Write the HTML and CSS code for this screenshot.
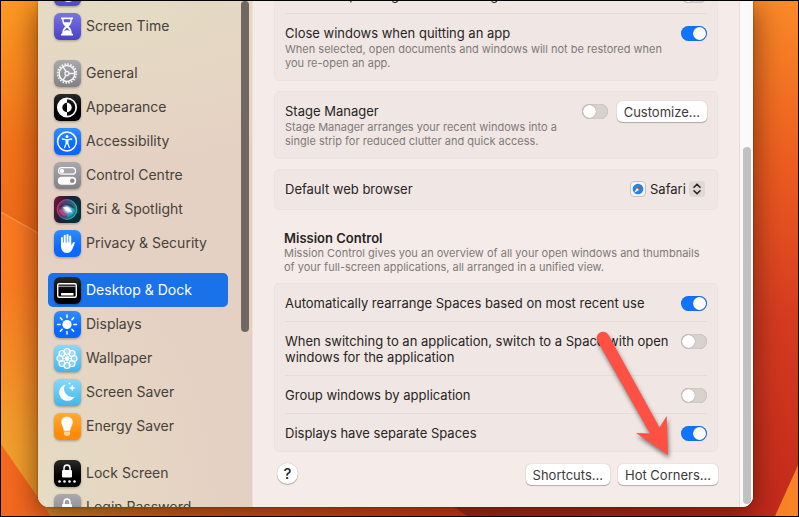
FILE: index.html
```html
<!DOCTYPE html>
<html lang="en">
<head>
<meta charset="utf-8">
<title>System Settings</title>
<link rel="stylesheet" href="styles.css">
</head>
<body>
<svg class="wallpaper" viewBox="0 0 799 517" preserveAspectRatio="none" aria-hidden="true">
  <defs>
    <linearGradient id="wl" x1="0" y1="0" x2="0" y2="1"><stop offset="0" stop-color="#fd9a22"/><stop offset=".28" stop-color="#f4731a"/><stop offset=".5" stop-color="#ee6a18"/></linearGradient>
    <linearGradient id="wl2" gradientUnits="userSpaceOnUse" x1="0" y1="215" x2="0" y2="450"><stop offset="0" stop-color="#fb7a22"/><stop offset=".3" stop-color="#fb7c22"/><stop offset="1" stop-color="#f2a02c"/></linearGradient>
    <linearGradient id="wr" x1="0" y1="0" x2="0" y2="1"><stop offset="0" stop-color="#fa8a28"/><stop offset=".3" stop-color="#ec5f20"/><stop offset=".62" stop-color="#d53b20"/><stop offset="1" stop-color="#c42a1b"/></linearGradient>
    <linearGradient id="wb" x1="0" y1="0" x2="1" y2="0"><stop offset="0" stop-color="#e89a2c"/><stop offset=".35" stop-color="#e0641c"/><stop offset="1" stop-color="#dd3f18"/></linearGradient>
    <linearGradient id="wd" x1="0" y1="0" x2="1" y2="0"><stop offset="0" stop-color="#a82a1b"/><stop offset="1" stop-color="#c72b1b"/></linearGradient>
  </defs>
  <rect width="400" height="517" fill="url(#wl)"/>
  <rect x="400" width="399" height="517" fill="url(#wr)"/>
  <path d="M0 212L60 246V517H0Z" fill="url(#wl2)"/>
  <path d="M0 212L60 246" stroke="#ff9440" stroke-width="1.5"/>
  <rect x="40" y="490" width="430" height="27" fill="url(#wb)"/>
  <path d="M430 490L467 517H760V490Z" fill="url(#wd)"/>
  <path d="M0 445L50 517H0Z" fill="#f4691f"/>
  <path d="M799 466L776 517H799Z" fill="#f98327"/>
</svg>

<div class="window">
  <aside class="sidebar">
    <nav class="nav" aria-label="Settings">
      <div class="group">
        <a class="item" href="#focus">
          <svg class="icon" viewBox="0 0 27 27"><rect width="27" height="27" rx="6" fill="#534bd0"/><path d="M16 5a9 9 0 1 0 6 14A9 9 0 0 1 16 5Z" fill="#fff"/></svg>
        </a>
        <a class="item" href="#screen-time">
          <svg class="icon" viewBox="0 0 27 27"><defs><linearGradient id="pu" x2="0" y2="1"><stop stop-color="#7a74e2"/><stop offset="1" stop-color="#4a41c8"/></linearGradient></defs><rect width="27" height="27" rx="6" fill="url(#pu)"/><path d="M7 4.500h12v1.800h-1.200c0 3.800-1.300 5.500-3.200 7.200 1.900 1.700 3.200 3.400 3.200 7.200H19v1.800H7v-1.800h1.200c0-3.800 1.300-5.500 3.200-7.200-1.900-1.700-3.200-3.400-3.200-7.200H7Z" fill="#fff"/><path d="M9.600 6.300h6.800c0 1.200-.2 2-.5 2.900h-5.800c-.3-.9-.5-1.700-.5-2.900ZM13 14.500l3.100 3.500-3.100-1-3.100 1Z" fill="#6159d4"/></svg>
          <span>Screen Time</span></a>
      </div>
      <div class="group">
        <a class="item" href="#general">
          <svg class="icon" viewBox="0 0 27 27"><defs><linearGradient id="gr" x2="0" y2="1"><stop stop-color="#aaaaae"/><stop offset="1" stop-color="#808085"/></linearGradient></defs><rect width="27" height="27" rx="6" fill="url(#gr)"/><g fill="none" stroke="#f5f5f5"><circle cx="13" cy="13.500" r="9.300" stroke-width="1.800" stroke-dasharray="1.600 1.322"/><circle cx="13" cy="13.500" r="7.900" stroke-width="1.500"/><circle cx="13" cy="13.500" r="2" stroke-width="1.300"/><path d="M15 13.500h5.500M12 11.700L9.200 7M12 15.300L9.200 20" stroke-width="1.400"/></g></svg>
          <span>General</span></a>
        <a class="item" href="#appearance">
          <svg class="icon" viewBox="0 0 27 27"><defs><linearGradient id="bk" x2="0" y2="1"><stop stop-color="#2a2a2a"/><stop offset=".6" stop-color="#000"/></linearGradient></defs><rect width="27" height="27" rx="6" fill="url(#bk)"/><circle cx="13" cy="13.500" r="9.200" fill="none" stroke="#fff" stroke-width="1.700"/><path d="M13 4.500a9 9 0 0 0 0 18v-4.300a4.700 4.700 0 0 1 0-9.400Z" fill="#fff"/><path d="M13 8.800a4.700 4.700 0 0 1 0 9.400Z" fill="#fff"/></svg>
          <span>Appearance</span></a>
        <a class="item" href="#accessibility">
          <svg class="icon" viewBox="0 0 27 27"><defs><linearGradient id="bl" x2="0" y2="1"><stop stop-color="#2f8dff"/><stop offset=".7" stop-color="#0868ff"/></linearGradient></defs><rect width="27" height="27" rx="6" fill="url(#bl)"/><circle cx="13" cy="13.500" r="9.400" fill="none" stroke="#fff" stroke-width="1.500"/><circle cx="13" cy="8.600" r="1.500" fill="#fff"/><path d="M8.300 11l3.300.7h2.800l3.300-.7M12.200 12v3.500l-1.600 4M13.800 12v3.500l1.600 4M13 11.800v3.600" fill="none" stroke="#fff" stroke-width="1.300" stroke-linecap="round" stroke-linejoin="round"/></svg>
          <span>Accessibility</span></a>
        <a class="item" href="#control-centre">
          <svg class="icon" viewBox="0 0 27 27"><rect width="27" height="27" rx="6" fill="url(#gr)"/><rect x="4.500" y="5.600" width="17" height="6.600" rx="3.300" fill="#a4a4a7" stroke="#fff" stroke-width="1.300"/><circle cx="8" cy="8.900" r="2.200" fill="#fff"/><rect x="3.800" y="14.800" width="18.400" height="8" rx="4" fill="#fff"/><circle cx="18.300" cy="18.800" r="2.300" fill="#8a8a8e"/></svg>
          <span>Control Centre</span></a>
        <a class="item" href="#siri">
          <svg class="icon" viewBox="0 0 27 27"><defs><linearGradient id="sb" x1="0" x2="1" y2=".4"><stop stop-color="#7c1236"/><stop offset=".5" stop-color="#1d1f35"/><stop offset="1" stop-color="#06313a"/></linearGradient><linearGradient id="so" x1="0" x2="1" y2=".3"><stop stop-color="#e0245e"/><stop offset=".45" stop-color="#5c5f9c"/><stop offset="1" stop-color="#1bb5a4"/></linearGradient><radialGradient id="sw"><stop stop-color="#fff"/><stop offset=".4" stop-color="#d9f2ff" stop-opacity=".85"/><stop offset="1" stop-color="#5cb6ff" stop-opacity="0"/></radialGradient></defs><rect width="27" height="27" rx="6" fill="url(#sb)"/><circle cx="13" cy="13.500" r="9.800" fill="url(#so)" fill-opacity=".6" stroke="url(#so)" stroke-width="1.200"/><path d="M5 11c5-5 12-4 16 1-5-2-9 0-16-1Z" fill="#111c33" opacity=".6"/><path d="M5 14c4-2 7 1 9 5-4 2-8 0-9-5Z" fill="#ee3e78" opacity=".7"/><path d="M12 14c4-3 7-2 9 0-1 4-4 7-8 7Z" fill="#2e9ee8" opacity=".7"/><ellipse cx="13.500" cy="13.500" rx="7" ry="5.200" fill="url(#sw)" transform="rotate(30 13.500 13.500)"/><path d="M8.500 11.500l5-1 5 6-4-1Z" fill="#fff" opacity=".8"/></svg>
          <span>Siri &amp; Spotlight</span></a>
        <a class="item" href="#privacy">
          <svg class="icon" viewBox="0 0 27 27"><rect width="27" height="27" rx="6" fill="url(#bl)"/><g fill="none" stroke="#fff" stroke-width="2" stroke-linecap="round"><path d="M8 8v7M10.700 5.800v9M13.500 5v9M16.200 6.500v8M19.800 13l-2.300 4.500"/></g><path d="M7 12.500h10.200v3l1.500-1.500 1 1.500c-1.200 4-2.900 7.500-6.600 7.500-4 0-6.100-3-6.100-7Z" fill="#fff"/></svg>
          <span>Privacy &amp; Security</span></a>
      </div>
      <div class="group">
        <a class="item selected" href="#desktop" aria-current="page">
          <svg class="icon" viewBox="0 0 27 27"><rect width="27" height="27" rx="6" fill="url(#bk)"/><rect x="3.700" y="6.700" width="18.600" height="13.600" rx="1.500" fill="none" stroke="#fff" stroke-width="1.400"/><path d="M4 9.300h18" stroke="#bbb" stroke-width="1"/><rect x="7" y="16" width="12.500" height="2.500" fill="#fff"/></svg>
          <span>Desktop &amp; Dock</span></a>
        <a class="item" href="#displays">
          <svg class="icon" viewBox="0 0 27 27"><rect width="27" height="27" rx="6" fill="url(#bl)"/><circle cx="13" cy="13.500" r="4.600" fill="#fff"/><path d="M13 4v2.600M13 20.400V23M3.500 13.500h2.600M19.900 13.500h2.600M6.300 6.800l1.800 1.800M17.900 18.400l1.800 1.800M6.300 20.200l1.800-1.800M17.900 8.600l1.800-1.800" stroke="#fff" stroke-width="1.500" stroke-linecap="round"/></svg>
          <span>Displays</span></a>
        <a class="item" href="#wallpaper">
          <svg class="icon" viewBox="0 0 27 27"><defs><linearGradient id="cy" x2="0" y2="1"><stop stop-color="#86dafa"/><stop offset="1" stop-color="#45b4ea"/></linearGradient></defs><rect width="27" height="27" rx="6" fill="url(#cy)"/><g fill="#fff" fill-opacity=".3" stroke="#fff" stroke-width="1.200"><circle cx="13" cy="6.500" r="3"/><circle cx="18" cy="8.500" r="3"/><circle cx="20" cy="13.500" r="3"/><circle cx="18" cy="18.500" r="3"/><circle cx="13" cy="20.500" r="3"/><circle cx="8" cy="18.500" r="3"/><circle cx="6" cy="13.500" r="3"/><circle cx="8" cy="8.500" r="3"/></g><path d="M13 9v9M8.500 13.500h9M9.800 10.300l6.400 6.400M9.800 16.700l6.400-6.400" stroke="#fff" stroke-width="1"/><circle cx="13" cy="13.500" r="2.300" fill="#fff"/></svg>
          <span>Wallpaper</span></a>
        <a class="item" href="#screen-saver">
          <svg class="icon" viewBox="0 0 27 27"><rect width="27" height="27" rx="6" fill="url(#cy)"/><path d="M11.500 5.500A8.300 8.300 0 1 0 20.800 17.500 8 8 0 0 1 11.500 5.500Z" fill="#fff"/><path d="M18.200 5.500l.9 2.600 2.600.9-2.600.9-.9 2.600-.9-2.600-2.600-.9 2.600-.9ZM15.500 3l.4 1.200 1.200.4-1.200.4-.4 1.200-.4-1.200-1.200-.4 1.200-.4Z" fill="#fff"/></svg>
          <span>Screen Saver</span></a>
        <a class="item" href="#energy">
          <svg class="icon" viewBox="0 0 27 27"><defs><linearGradient id="or" x2="0" y2="1"><stop stop-color="#ffac35"/><stop offset=".8" stop-color="#ff8a05"/></linearGradient></defs><rect width="27" height="27" rx="6" fill="url(#or)"/><path d="M13 3.700c3.600 0 5.700 2.500 5.700 5.400 0 3-2 4.200-2.400 8.600H9.700C9.300 13.300 7.300 12.100 7.300 9.100c0-2.900 2.100-5.400 5.700-5.400Z" fill="#fff"/><path d="M10 18.600h6v2.400c0 1.300-1.200 2-3 2s-3-.7-3-2Z" fill="#ffd39a"/></svg>
          <span>Energy Saver</span></a>
      </div>
      <div class="group">
        <a class="item" href="#lock">
          <svg class="icon" viewBox="0 0 27 27"><rect width="27" height="27" rx="6" fill="url(#bk)"/><path d="M10 10.500V8.300a3 3.300 0 0 1 6 0v2.200" fill="none" stroke="#fff" stroke-width="1.500"/><rect x="8" y="10" width="10" height="7.500" rx="1.200" fill="#fff"/><g fill="#fff"><circle cx="5.500" cy="21.500" r="1.300"/><circle cx="10.500" cy="21.500" r="1.300"/><circle cx="15.500" cy="21.500" r="1.300"/><circle cx="20.500" cy="21.500" r="1.300"/></g></svg>
          <span>Lock Screen</span></a>
        <a class="item" href="#login">
          <svg class="icon" viewBox="0 0 27 27"><rect width="27" height="27" rx="6" fill="url(#gr)"/><path d="M10 10.500V8.300a3 3.300 0 0 1 6 0v2.200" fill="none" stroke="#fff" stroke-width="1.500"/><rect x="8" y="10" width="10" height="7.500" rx="1.200" fill="#fff"/></svg>
          <span>Login Password</span></a>
      </div>
    </nav>
    <div class="side-scroll"></div>
  </aside>

  <main class="content">
    <section class="card card-scrolled">
      <div class="row">
        <label class="title" for="ask">Ask to keep changes when closing documents</label>
        <input class="switch" type="checkbox" role="switch" id="ask">
      </div>
      <div class="row">
        <div class="text">
          <label class="title" for="close">Close windows when quitting an app</label>
          <p class="desc">When selected, open documents and windows will not be restored when<br>you re-open an app.</p>
        </div>
        <input class="switch" type="checkbox" role="switch" id="close" checked>
      </div>
    </section>

    <section class="card">
      <div class="row">
        <div class="text">
          <label class="title" for="stage">Stage Manager</label>
          <p class="desc">Stage Manager arranges your recent windows into a<br>single strip for reduced clutter and quick access.</p>
        </div>
        <input class="switch" type="checkbox" role="switch" id="stage">
        <button class="button in-row" type="button">Customize...</button>
      </div>
    </section>

    <section class="card">
      <div class="row row-select">
        <label class="title" for="browser">Default web browser</label>
        <span class="picker">
          <svg class="safari" viewBox="0 0 16 16" aria-hidden="true"><rect x=".5" y=".5" width="15" height="15" rx="3.500" fill="#f4f4f4" stroke="#c6c2c0"/><circle cx="8" cy="8" r="5.300" fill="#1f87e5"/><path d="M11.800 4.200L9 9 7 7Z" fill="#f03a30"/><path d="M4.200 11.800L7 7l2 2Z" fill="#fff"/></svg>
          <select id="browser"><option>Safari</option></select>
          <svg class="chevrons" viewBox="0 0 16 16" aria-hidden="true"><rect width="16" height="16" rx="4" fill="#e0d8d5"/><path d="M5 6.200L8 3.200l3 3M5 9.800l3 3 3-3" fill="none" stroke="#272423" stroke-width="1.600" stroke-linecap="round" stroke-linejoin="round"/></svg>
        </span>
      </div>
    </section>

    <header class="section-head">
      <h2>Mission Control</h2>
      <p class="desc">Mission Control gives you an overview of all your open windows and thumbnails<br>of your full-screen applications, all arranged in a unified view.</p>
    </header>

    <section class="card">
      <div class="row">
        <label class="title" for="rearrange">Automatically rearrange Spaces based on most recent use</label>
        <input class="switch" type="checkbox" role="switch" id="rearrange" checked>
      </div>
      <div class="row">
        <label class="title" for="switching">When switching to an application, switch to a Space with open<br>windows for the application</label>
        <input class="switch" type="checkbox" role="switch" id="switching">
      </div>
      <div class="row">
        <label class="title" for="group">Group windows by application</label>
        <input class="switch" type="checkbox" role="switch" id="group">
      </div>
      <div class="row">
        <label class="title" for="separate">Displays have separate Spaces</label>
        <input class="switch" type="checkbox" role="switch" id="separate" checked>
      </div>
    </section>

    <footer class="actions">
      <button class="help" type="button" aria-label="Help">?</button>
      <button class="button" type="button">Shortcuts...</button>
      <button class="button" type="button">Hot Corners...</button>
    </footer>
  </main>

  <div class="track"><div class="thumb"></div></div>
</div>

<svg class="arrow" viewBox="0 0 84 132" aria-hidden="true"><path d="M7.500 16A6 6 0 0 1 18.500 10L69.500 102.500L76.700 91L78 130L46 108L60 108.500Z" fill="#ff5044"/></svg>
</body>
</html>
```
FILE: styles.css
```css
* { box-sizing: border-box; }

body {
  margin: 0;
  height: 100vh;
  display: flex;
  position: relative;
  overflow: hidden;
  border: 1px solid #000;
  font: 13px/16px Inter, "Liberation Sans", sans-serif;
  color: #272423;
}

h2, p { margin: 0; }

.wallpaper {
  position: absolute;
  inset: 0;
  width: 100%;
  height: 100%;
}

.window {
  position: relative;
  flex: 1;
  display: flex;
  margin: 0 45px 9px 37px;
  overflow: hidden;
  border-radius: 0 0 11px 11px;
  background: #f5ece9;
  box-shadow: 0 8px 28px 2px rgba(60, 15, 0, .6), 0 0 2px rgba(0, 0, 0, .5);
}

/* Sidebar */
.sidebar {
  display: flex;
  flex: 0 0 215px;
  padding: 0 3px 0 10px;
  border-right: 1px solid #ecdfd8;
  background:
    radial-gradient(ellipse 400px 160px at 20% 0, #e5dcc4, transparent),
    radial-gradient(ellipse 180px 260px at 0 100%, #e6dcc3, transparent),
    #e5d1c3;
}

.nav {
  flex: 0 0 180px;
  margin-top: -26px;
}

.group { margin-bottom: 13px; }

.item {
  display: flex;
  align-items: center;
  gap: 5px;
  height: 34px;
  padding-left: 6px;
  border-radius: 5px;
  color: #46413b;
  font-size: 14px;
  text-decoration: none;
}

.selected {
  background: #1a72ea;
  color: #fff;
}

.icon {
  flex: none;
  width: 27px;
  height: 27px;
  filter: drop-shadow(0 1px 1px rgba(0, 0, 0, .3));
}

.side-scroll {
  width: 8px;
  height: 331px;
  margin-left: auto;
  border-radius: 4px;
  background: #716861;
}

/* Content */
.content {
  flex: 1;
  padding: 0 21px;
}

.card {
  margin-bottom: 10px;
  padding: 0 10px;
  border: 1px solid #ebe3e0;
  border-radius: 5px;
  background: #f0e7e4;
}

.card-scrolled { margin-top: -26px; }

.row {
  display: flex;
  align-items: flex-start;
  padding: 11px 0 10px;
}

.row + .row { border-top: 1px solid #e4dcd9; }

.title {
  display: block;
  flex: 1;
}

.text { flex: 1; }

.desc {
  margin-top: 1px;
  color: #807977;
  font-size: 11px;
  line-height: 14px;
}

.switch {
  appearance: none;
  flex: none;
  width: 26px;
  height: 15px;
  margin: 1px 0 0;
  border-radius: 8px;
  background: #d9d1ce;
  box-shadow: inset 0 0 1px rgba(0, 0, 0, .35);
}

.switch::before {
  content: "";
  display: block;
  width: 13px;
  height: 13px;
  margin: 1px;
  border-radius: 50%;
  background: #fff;
  box-shadow: 0 0 1px rgba(0, 0, 0, .5);
}

.switch:checked { background: #0f74ff; }
.switch:checked::before { margin-left: 12px; }

.button {
  height: 21px;
  padding: 0 7px;
  border: 0;
  border-radius: 5px;
  background: #fff;
  box-shadow: 0 0 1px rgba(0, 0, 0, .3), 0 1px 1px rgba(0, 0, 0, .25);
  color: #3c3a39;
  font: inherit;
}

.in-row { margin: -2px 0 -3px 9px; }

.row-select { padding-bottom: 12px; }

.picker {
  display: flex;
  align-items: center;
  padding-right: 2px;
}

.picker svg {
  width: 16px;
  height: 16px;
}

.picker select {
  appearance: none;
  margin: 0 3px 0 4px;
  padding: 0;
  border: 0;
  background: none;
  color: inherit;
  font: inherit;
}

.section-head { padding: 10px 10px 9px; }

.section-head h2 {
  font-size: 13px;
  font-weight: 600;
  line-height: 16px;
}

.section-head .desc { margin: 0; }

.actions {
  display: flex;
  gap: 8px;
  padding-top: 2px;
}

.help {
  width: 21px;
  height: 21px;
  margin: -1px auto 0 3px;
  padding: 0;
  border: 0;
  border-radius: 50%;
  background: #fff;
  box-shadow: 0 0 1px rgba(0, 0, 0, .3), 0 1px 1px rgba(0, 0, 0, .25);
  color: #272423;
  font: 500 15px/21px Inter, "Liberation Sans", sans-serif;
}

.track {
  display: flex;
  flex-direction: column;
  justify-content: flex-end;
  flex: 0 0 14px;
  padding: 0 2px 3px;
  border-left: 1px solid #e3dedc;
  background: #fafafa;
}

.thumb {
  width: 8px;
  height: 71%;
  margin-left: 1px;
  border-radius: 4px;
  background: #c1c1c1;
}

/* Pointer annotation lying over the window */
.arrow {
  position: absolute;
  left: 589px;
  top: 324px;
  width: 84px;
  height: 132px;
  overflow: visible;
  filter: drop-shadow(1px 3px 2px rgba(0, 0, 0, .5));
}
```
